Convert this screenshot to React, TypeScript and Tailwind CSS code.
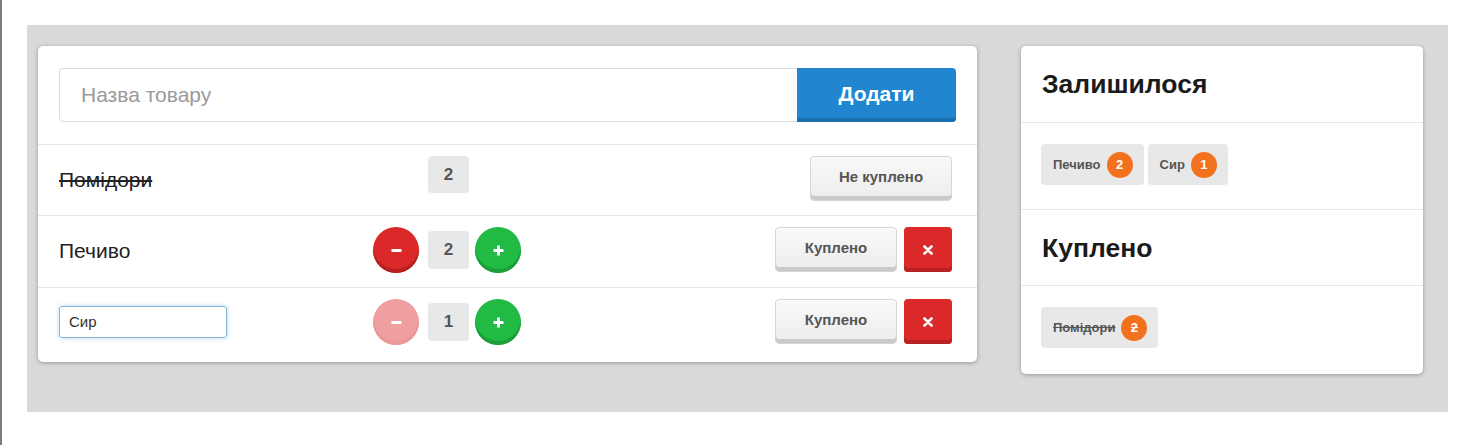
import React from "react";

type Item = {
  name: string;
  qty: number;
  bought: boolean;
  editing?: boolean;
};

const items: Item[] = [
  { name: "Помідори", qty: 2, bought: true },
  { name: "Печиво", qty: 2, bought: false },
  { name: "Сир", qty: 1, bought: false, editing: true },
];

const MinusIcon = () => (
  <svg width="11" height="11" viewBox="0 0 11 11">
    <rect x="0.5" y="4" width="10" height="3" rx="0.6" fill="white" />
  </svg>
);

const PlusIcon = () => (
  <svg width="11" height="11" viewBox="0 0 11 11">
    <rect x="0.5" y="4" width="10" height="3" rx="0.6" fill="white" />
    <rect x="4" y="0.5" width="3" height="10" rx="0.6" fill="white" />
  </svg>
);

const CrossIcon = () => (
  <svg width="10" height="10" viewBox="0 0 10 10">
    <path d="M1.5 1.5 L8.5 8.5 M8.5 1.5 L1.5 8.5" stroke="white" strokeWidth="2.6" strokeLinecap="round" />
  </svg>
);

const GrayButton = ({ label, width }: { label: string; width: string }) => (
  <button
    className={`${width} flex h-[45px] items-center justify-center rounded-[4px] border border-[#d6d6d6] bg-gradient-to-b from-[#f9f9f9] to-[#ececec] pb-[2px] text-[15px] font-bold text-[#555] shadow-[inset_0_-4px_0_#c9c9c9]`}
  >
    {label}
  </button>
);

const Row = ({ item }: { item: Item }) => (
  <div className="flex items-start border-t border-[#e6e6e6] pb-[14px] pl-[21px] pr-[25px] pt-[11px] last:pb-[17px]">
    <div className="flex h-[45px] w-[314px] items-center">
      {item.editing ? (
        <input
          defaultValue={item.name}
          className="h-[32px] w-[168px] rounded-[3px] border border-[#85b7d9] px-[9px] text-[15px] text-[#333] shadow-[0_0_4px_rgba(33,133,208,0.35)] outline-none"
        />
      ) : (
        <span className={`pt-[3px] text-[21px] text-[#222] ${item.bought ? "line-through" : ""}`}>
          {item.name}
        </span>
      )}
    </div>
    <div className="flex items-center">
      {item.bought ? (
        <div className="ml-[55px] flex h-[37px] w-[41px] items-center justify-center rounded-[4px] bg-[#e8e8e8] text-[17px] font-bold text-[#555]">
          {item.qty}
        </div>
      ) : (
        <>
          <button
            className={`flex h-[46px] w-[46px] items-center justify-center rounded-full ${
              item.qty > 1
                ? "bg-[#db2828] shadow-[inset_0_-4px_0_#b72121]"
                : "bg-[#ef9f9f] shadow-[inset_0_-4px_0_#ec9797]"
            }`}
          >
            <MinusIcon />
          </button>
          <div className="ml-[9px] flex h-[38px] w-[41px] items-center justify-center rounded-[4px] bg-[#e8e8e8] text-[17px] font-bold text-[#555]">
            {item.qty}
          </div>
          <button className="ml-[6px] flex h-[46px] w-[46px] items-center justify-center rounded-full bg-[#21ba45] shadow-[inset_0_-4px_0_#1c9e3b]">
            <PlusIcon />
          </button>
        </>
      )}
    </div>
    <div className="ml-auto flex items-center gap-[7px]">
      {item.bought ? (
        <GrayButton label="Не куплено" width="w-[142px]" />
      ) : (
        <>
          <GrayButton label="Куплено" width="w-[122px]" />
          <button className="flex h-[45px] w-[48px] items-center justify-center rounded-[4px] bg-[#db2828] shadow-[inset_0_-4px_0_#b72121]">
            <CrossIcon />
          </button>
        </>
      )}
    </div>
  </div>
);

const Badge = ({ item }: { item: Item }) => (
  <div className="flex h-[41px] items-center rounded-[4px] bg-[#e8e8e8] pl-[12px] pr-[11px]">
    <span className={`text-[13px] font-bold text-[#555] ${item.bought ? "line-through" : ""}`}>
      {item.name}
    </span>
    <span
      className={`ml-[6px] flex h-[26px] w-[26px] items-center justify-center rounded-full bg-[#f2711c] text-[13px] font-bold text-white ${
        item.bought ? "line-through" : ""
      }`}
    >
      {item.qty}
    </span>
  </div>
);

const Section = ({ title, list }: { title: string; list: Item[] }) => (
  <>
    <div className="flex h-[76px] items-center border-[#e6e6e6] px-[21px] [&:not(:first-child)]:border-t">
      <h2 className="pt-[2px] text-[26.5px] font-bold text-[#1b1b1b]">{title}</h2>
    </div>
    <div className="flex gap-[4px] border-t border-[#e6e6e6] pb-[24px] pl-[20px] pt-[21px] last:pb-[26px]">
      {list.map((it) => (
        <Badge key={it.name} item={it} />
      ))}
    </div>
  </>
);

export default function App() {
  return (
    <div className="min-h-[445px] border-l-2 border-[#7d7d7d] bg-white pl-[25px] pt-[25px] font-['Liberation_Sans',Arial,sans-serif]">
      <div className="flex w-[1421px] items-start bg-[#d9d9d9] pb-[38px] pl-[11px] pt-[21px]">
        <div className="w-[939px] rounded-[5px] bg-white shadow-[0_1px_4px_rgba(0,0,0,0.3)]">
          <div className="flex px-[21px] py-[22px]">
            <input
              placeholder="Назва товару"
              className="h-[54px] flex-1 rounded-l-[4px] border border-r-0 border-[#dcdcdc] px-[21px] text-[21px] text-[#333] outline-none placeholder:text-[#9a9a9a]"
            />
            <button className="h-[54px] w-[159px] rounded-r-[4px] bg-[#2185d0] pb-[2px] text-[21px] font-bold text-white shadow-[inset_0_-4px_0_#1a6fb0]">
              Додати
            </button>
          </div>
          {items.map((it) => (
            <Row key={it.name} item={it} />
          ))}
        </div>
        <div className="ml-[44px] w-[402px] rounded-[5px] bg-white shadow-[0_1px_4px_rgba(0,0,0,0.3)]">
          <Section title="Залишилося" list={items.filter((i) => !i.bought)} />
          <Section title="Куплено" list={items.filter((i) => i.bought)} />
        </div>
      </div>
    </div>
  );
}
